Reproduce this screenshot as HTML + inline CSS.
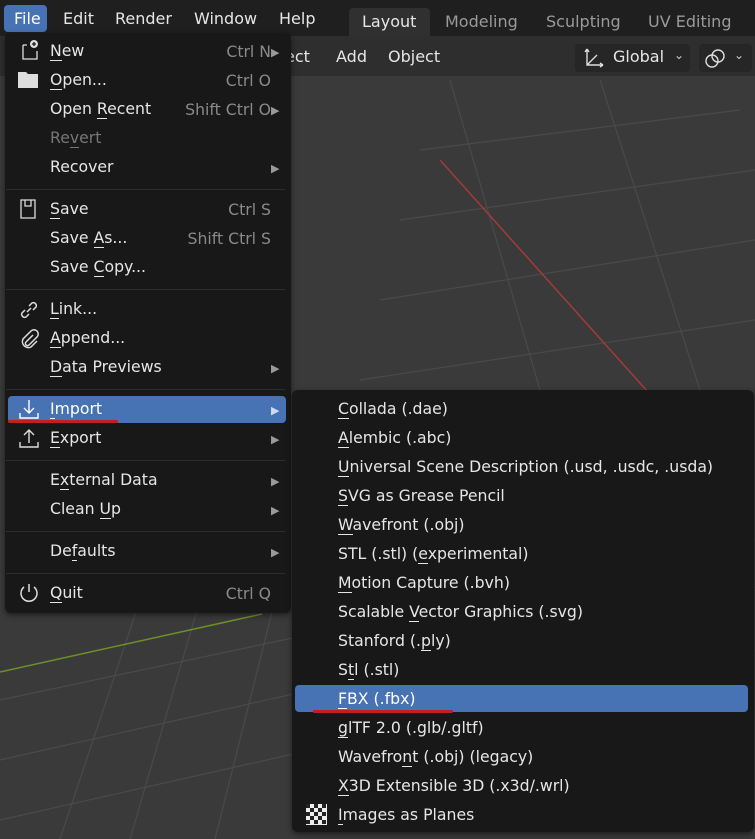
<!DOCTYPE html>
<html><head><style>
body{margin:0;width:755px;height:839px;overflow:hidden;background:#3a3a3a;font-family:"DejaVu Sans","Liberation Sans",sans-serif;font-size:16px;color:#e6e6e6;position:relative}
.a{position:absolute;white-space:nowrap}
.top{position:absolute;left:0;top:0;width:755px;height:36px;background:#1f1f1f}
.hdr{position:absolute;left:0;top:36px;width:755px;height:40px;background:#2e2e2e}
.menu{position:absolute;background:#181818;border-radius:6px;box-shadow:0 2px 6px rgba(0,0,0,.5)}
.m{font-size:15.7px}
.it{position:absolute;left:0;height:26px;line-height:26px;white-space:nowrap}
.sc{position:absolute;right:20px;color:#8a8a8a;white-space:nowrap}
.sep{position:absolute;left:6px;right:6px;height:1px;background:#2c2c2c}
.ar{position:absolute;color:#9a9a9a;font-size:11px}
u{text-decoration:none;border-bottom:1px solid currentColor}
</style></head><body>
<svg class="a" style="left:0;top:0" width="755" height="839">
<g stroke="#4a4a4a" stroke-width="1.2" fill="none">
<line x1="0" y1="700" x2="755" y2="540"/><line x1="0" y1="760" x2="755" y2="590"/><line x1="0" y1="820" x2="755" y2="650"/>
<line x1="60" y1="839" x2="140" y2="600"/><line x1="130" y1="839" x2="200" y2="600"/><line x1="215" y1="839" x2="275" y2="600"/>
<line x1="420" y1="150" x2="740" y2="110"/><line x1="400" y1="220" x2="755" y2="170"/><line x1="380" y1="300" x2="755" y2="240"/><line x1="360" y1="380" x2="755" y2="320"/>
<line x1="450" y1="80" x2="540" y2="390"/><line x1="600" y1="80" x2="700" y2="390"/>
</g>
<line x1="440" y1="160" x2="648" y2="392" stroke="#a33a3a" stroke-width="1.5"/>
<line x1="0" y1="672" x2="262" y2="614" stroke="#6e8f2a" stroke-width="1.5"/>
</svg>
<div class="top"></div>
<div class="hdr"></div>
<div class="a" style="left:4px;top:5px;width:43px;height:27px;background:#4772b3;border-radius:4px"></div>
<div class="a" style="left:14px;top:9px;color:#fff">File</div>
<div class="a" style="left:63px;top:9px">Edit</div>
<div class="a" style="left:115px;top:9px">Render</div>
<div class="a" style="left:194px;top:9px">Window</div>
<div class="a" style="left:279px;top:9px">Help</div>
<div class="a" style="left:349px;top:8px;width:81px;height:29px;background:#303030;border-radius:4px 4px 0 0"></div>
<div class="a" style="left:362px;top:12px">Layout</div>
<div class="a" style="left:445px;top:12px;color:#9a9a9a">Modeling</div>
<div class="a" style="left:546px;top:12px;color:#9a9a9a">Sculpting</div>
<div class="a" style="left:648px;top:12px;color:#9a9a9a">UV Editing</div>
<div class="a" style="left:285px;top:47px">ect</div>
<div class="a" style="left:336px;top:47px">Add</div>
<div class="a" style="left:388px;top:47px">Object</div>
<div class="a" style="left:575px;top:44px;width:115px;height:28px;background:#262626;border-radius:4px"></div>
<div class="a" style="left:613px;top:47px">Global</div>
<div class="a" style="left:674px;top:48px;font-size:12px;color:#ccc">⌄</div>
<svg class="a" style="left:583px;top:46px" width="24" height="24" fill="none" stroke="#ddd" stroke-width="1.4"><path d="M4 3v16h16M4 3l-2 3M4 3l2 3M20 19l-3-2M20 19l-3 2M4 19l10-10"/></svg>
<div class="a" style="left:699px;top:44px;width:53px;height:28px;background:#262626;border-radius:4px"></div>
<svg class="a" style="left:703px;top:47px" width="30" height="24" fill="none" stroke="#ddd" stroke-width="1.4"><circle cx="9" cy="14" r="6"/><circle cx="15" cy="9" r="6"/></svg>
<div class="a" style="left:734px;top:48px;font-size:12px;color:#ccc">⌄</div>

<div class="menu" style="left:5px;top:33px;width:286px;height:580px"></div>
<div class="a m" style="left:0;top:33px;width:291px">
<svg class="a" style="left:17px;top:5px" width="24" height="24" fill="none" stroke="#ddd" stroke-width="1.3"><path d="M6 7h4M6 7v14h14v-8"/><circle cx="17" cy="6" r="4" fill="#ddd" stroke="none"/><path d="M17 4v4M15 6h4" stroke="#181818"/></svg>
<svg class="a" style="left:17px;top:36px" width="24" height="20"><path d="M1 3h8l2 2h10v14H1z" fill="#ddd"/></svg>
<svg class="a" style="left:17px;top:164px" width="24" height="24" fill="none" stroke="#ddd" stroke-width="1.3"><path d="M4 3h14v18H4zM8 3v6h6V3"/></svg>
<svg class="a" style="left:17px;top:265px" width="24" height="24" fill="none" stroke="#ddd" stroke-width="1.5"><path d="M10 14l4-4M8 12l-3 3a3 3 0 004 4l3-3M16 12l3-3a3 3 0 00-4-4l-3 3"/></svg>
<svg class="a" style="left:17px;top:294px" width="24" height="24" fill="none" stroke="#ddd" stroke-width="1.5"><path d="M16 8l-7 7a2 2 0 003 3l8-8a4 4 0 00-6-6l-8 8a6 6 0 008 8l6-6"/></svg>
<svg class="a" style="left:17px;top:393px" width="24" height="24" fill="none" stroke="#ddd" stroke-width="1.4"><path d="M12 17V4M7 9l5-5 5 5M3 16v5h18v-5"/></svg>
<svg class="a" style="left:17px;top:548px" width="24" height="24" fill="none" stroke="#ddd" stroke-width="1.5"><path d="M12 3v8M7 6a8 8 0 1010 0"/></svg>
<div class="it" style="left:50px;top:5px"><u>N</u>ew</div><div class="sc" style="top:9px">Ctrl N</div><div class="ar" style="left:271px;top:13px">▶</div>
<div class="it" style="left:50px;top:34px"><u>O</u>pen...</div><div class="sc" style="top:38px">Ctrl O</div>
<div class="it" style="left:50px;top:63px">Open <u>R</u>ecent</div><div class="sc" style="top:67px">Shift Ctrl O</div><div class="ar" style="left:271px;top:71px">▶</div>
<div class="it" style="left:50px;top:92px;color:#777">Re<u>v</u>ert</div>
<div class="it" style="left:50px;top:121px">Recover</div><div class="ar" style="left:271px;top:129px">▶</div>
<div class="sep" style="top:156px"></div>
<div class="it" style="left:50px;top:163px"><u>S</u>ave</div><div class="sc" style="top:167px">Ctrl S</div>
<div class="it" style="left:50px;top:192px">Save <u>A</u>s...</div><div class="sc" style="top:196px">Shift Ctrl S</div>
<div class="it" style="left:50px;top:221px">Save <u>C</u>opy...</div>
<div class="sep" style="top:256px"></div>
<div class="it" style="left:50px;top:263px"><u>L</u>ink...</div>
<div class="it" style="left:50px;top:292px"><u>A</u>ppend...</div>
<div class="it" style="left:50px;top:321px"><u>D</u>ata Previews</div><div class="ar" style="left:271px;top:329px">▶</div>
<div class="sep" style="top:356px"></div>
<div class="a" style="left:8px;top:363px;width:278px;height:27px;background:#4772b3;border-radius:4px"></div>
<svg class="a" style="left:17px;top:364px" width="24" height="24" fill="none" stroke="#fff" stroke-width="1.4"><path d="M12 3v13M7 11l5 5 5-5M3 16v5h18v-5"/></svg>
<div class="it" style="left:50px;top:363px;color:#fff"><u>I</u>mport</div><div class="ar" style="left:271px;top:371px;color:#cfdcf0">▶</div>
<div class="a" style="left:8px;top:387px;width:110px;height:3px;background:#c02020;border-radius:2px"></div>
<div class="it" style="left:50px;top:392px"><u>E</u>xport</div><div class="ar" style="left:271px;top:400px">▶</div>
<div class="sep" style="top:427px"></div>
<div class="it" style="left:50px;top:434px">E<u>x</u>ternal Data</div><div class="ar" style="left:271px;top:442px">▶</div>
<div class="it" style="left:50px;top:463px">Clean <u>U</u>p</div><div class="ar" style="left:271px;top:471px">▶</div>
<div class="sep" style="top:498px"></div>
<div class="it" style="left:50px;top:505px">De<u>f</u>aults</div><div class="ar" style="left:271px;top:513px">▶</div>
<div class="sep" style="top:540px"></div>
<div class="it" style="left:50px;top:547px"><u>Q</u>uit</div><div class="sc" style="top:551px">Ctrl Q</div>
</div>

<div class="menu" style="left:292px;top:390px;width:462px;height:442px"></div>
<div class="a" style="left:295px;top:685px;width:453px;height:27px;background:#4772b3;border-radius:4px"></div>
<div class="a" style="left:313px;top:710px;width:140px;height:3px;background:#c02020;border-radius:2px"></div>
<div class="a m" style="left:338px;top:394px;line-height:29px;white-space:nowrap">
<div><u>C</u>ollada (.dae)</div>
<div><u>A</u>lembic (.abc)</div>
<div><u>U</u>niversal Scene Description (.usd, .usdc, .usda)</div>
<div><u>S</u>VG as Grease Pencil</div>
<div><u>W</u>avefront (.obj)</div>
<div>STL (.stl) (<u>e</u>xperimental)</div>
<div><u>M</u>otion Capture (.bvh)</div>
<div>Scalable <u>V</u>ector Graphics (.svg)</div>
<div>Stanford (.<u>p</u>ly)</div>
<div>S<u>t</u>l (.stl)</div>
<div style="color:#fff"><u>F</u>BX (.fbx)</div>
<div><u>g</u>lTF 2.0 (.glb/.gltf)</div>
<div>Wavefro<u>n</u>t (.obj) (legacy)</div>
<div><u>X</u>3D Extensible 3D (.x3d/.wrl)</div>
<div><u>I</u>mages as Planes</div>
</div>
<svg class="a" style="left:306px;top:804px" width="21" height="21"><rect width="21" height="21" fill="#eee"/><g fill="#222"><rect x="0" y="0" width="4" height="4"/><rect x="8" y="0" width="4" height="4"/><rect x="16" y="0" width="4" height="4"/><rect x="4" y="4" width="4" height="4"/><rect x="12" y="4" width="4" height="4"/><rect x="0" y="8" width="4" height="4"/><rect x="8" y="8" width="4" height="4"/><rect x="16" y="8" width="4" height="4"/><rect x="4" y="12" width="4" height="4"/><rect x="12" y="12" width="4" height="4"/><rect x="0" y="16" width="4" height="4"/><rect x="8" y="16" width="4" height="4"/><rect x="16" y="16" width="4" height="4"/></g></svg>
</body></html>
